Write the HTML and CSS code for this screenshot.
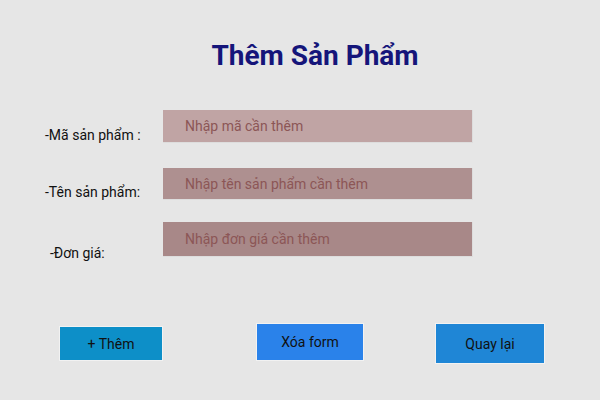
FILE: index.html
```html
<!DOCTYPE html>
<html lang="vi">
<head>
<meta charset="utf-8">
<title>Thêm Sản Phẩm</title>
<link rel="stylesheet" href="styles.css">
</head>
<body>
<div class="page">
  <h1 class="title">Thêm Sản Phẩm</h1>
  <form class="form">
    <div class="row row1">
      <label class="label">-Mã sản phẩm :</label>
      <input class="input in1" type="text" placeholder="Nhập mã cần thêm">
    </div>
    <div class="row row2">
      <label class="label">-Tên sản phẩm:</label>
      <input class="input in2" type="text" placeholder="Nhập tên sản phẩm cần thêm">
    </div>
    <div class="row row3">
      <label class="label">-Đơn giá:</label>
      <input class="input in3" type="text" placeholder="Nhập đơn giá cần thêm">
    </div>
  </form>
  <div class="actions">
    <button class="btn btn-add" type="button">+ Thêm</button>
    <button class="btn btn-clear" type="button">Xóa form</button>
    <button class="btn btn-back" type="button">Quay lại</button>
  </div>
</div>
</body>
</html>
```
FILE: styles.css
```css
html, body {
  margin: 0;
  padding: 0;
  background: #e6e6e6;
  font-family: Roboto, "Noto Sans", sans-serif;
}
.page {
  width: 600px;
  height: 400px;
  padding-top: 38px;
  box-sizing: border-box;
}
.title {
  margin: 0;
  padding-left: 30px;
  text-align: center;
  font: 700 28px/36px Roboto, sans-serif;
  color: #15157a;
}
.form {
  margin-top: 36px;
  padding-left: 45px;
  display: flex;
  flex-direction: column;
}
.row {
  display: flex;
  align-items: flex-start;
}
.label {
  width: 118px;
  font: 14px/16px Roboto, sans-serif;
  color: #111;
}
.input {
  width: 310px;
  box-sizing: border-box;
  border: none;
  border-right: 1px solid #ddd;
  border-bottom: 1px solid #ddd;
  padding: 0 0 0 22px;
  margin: 0;
  font: 14px Roboto, sans-serif;
  outline: none;
}
.input::placeholder {
  color: #8c5656;
}
.row1 .label { padding-top: 17px; }
.in1 { height: 33px; background: #c0a4a4; }
.row2 { margin-top: 25px; }
.row2 .label { padding-top: 16px; }
.in2 { height: 32px; background: #ae9090; }
.row3 { margin-top: 22px; }
.row3 .label { padding-top: 23px; padding-left: 5px; width: 113px; }
.in3 { height: 35px; background: #a88888; }
.actions {
  margin-top: 62px;
  padding-left: 59px;
  display: flex;
  align-items: flex-start;
}
.btn {
  box-sizing: border-box;
  border: 1px solid #f2f2f2;
  padding: 0;
  font: 14px Roboto, sans-serif;
  color: #111;
}
.btn-add {
  margin-top: 3px;
  width: 104px;
  height: 35px;
  background: #0d8fc8;
}
.btn-clear {
  margin-left: 93px;
  width: 108px;
  height: 38px;
  background: #2a82ea;
}
.btn-back {
  margin-left: 71px;
  width: 110px;
  height: 41px;
  background: #1f86d6;
}
```
